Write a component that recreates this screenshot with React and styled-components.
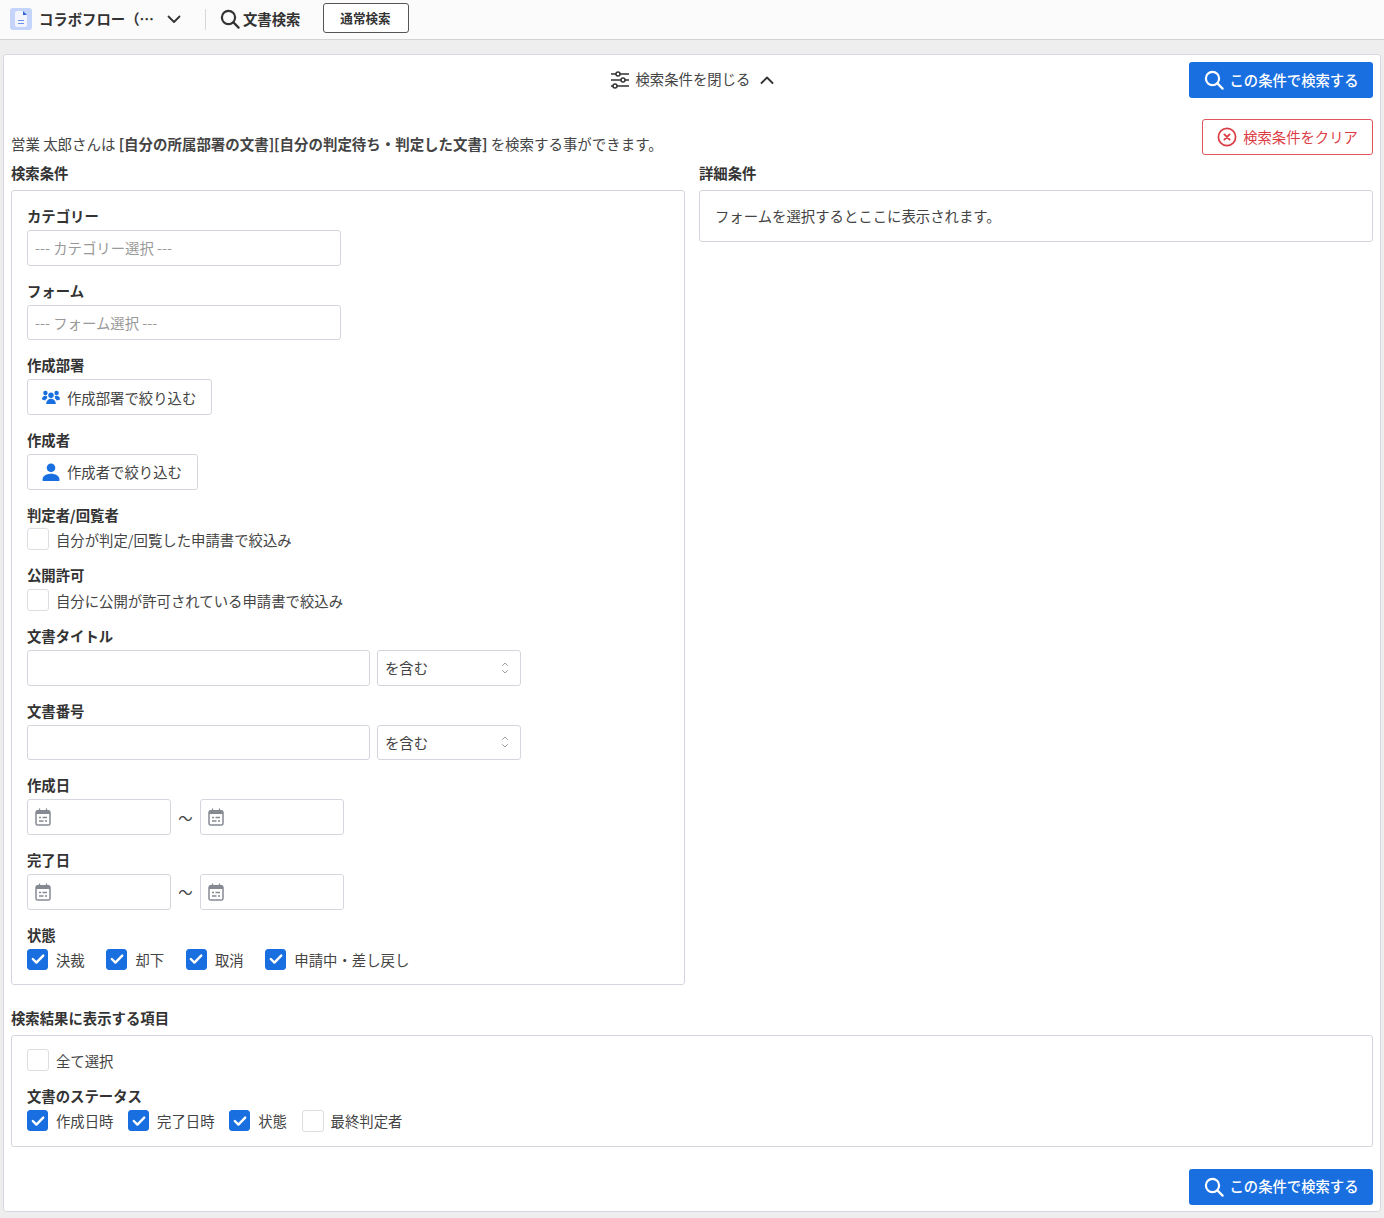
import React from 'react';
import styled, { createGlobalStyle } from 'styled-components';

const GlobalStyle = createGlobalStyle`
  * {
    box-sizing: border-box;
  }
  body {
    margin: 0;
    background-color: #eeeeee;
    color: #444;
    font-family: "Noto Sans CJK JP", "Noto Sans", sans-serif;
    font-size: 14.38px;
    line-height: 21px;
  }
`;

const TopBar = styled.header`
  display: flex;
  align-items: center;
  height: 40px;
  padding: 0 0 1px 10px;
  background-color: #fbfbfb;
  border-bottom: 1px solid #d4d4d4;
`;

const AppName = styled.span`
  width: 127px;
  margin-left: 7px;
  padding-bottom: 2px;
  color: #333;
  font-weight: 700;
  white-space: nowrap;
`;

const Divider = styled.span`
  width: 1px;
  height: 21px;
  margin: 0 14px 0 23px;
  background-color: #d8d8d8;
`;

const PageTitle = styled.span`
  margin-left: 3px;
  padding-bottom: 2px;
  color: #333;
  font-weight: 700;
`;

const ModeButton = styled.button`
  width: 86px;
  height: 30px;
  margin: 0 0 3px 22px;
  padding: 0;
  background-color: #fff;
  border: 1px solid #555;
  border-radius: 3px;
  color: #333;
  font: 700 12.6px "Noto Sans CJK JP", sans-serif;
`;

const Card = styled.main`
  margin: 14px 3px 0;
  padding: 7px 7px 6px;
  background-color: #fff;
  border: 1px solid #d5d8de;
  border-radius: 3px;
`;

const HeadRow = styled.div`
  display: grid;
  grid-template-columns: 1fr auto 1fr;
  align-items: center;
`;

const Toggle = styled.div`
  grid-column: 2;
  display: flex;
  align-items: center;
  gap: 6px;
  color: #444;
`;

const ToggleText = styled.span`
  margin-right: 2px;
  padding-bottom: 3px;
`;

const PrimaryButton = styled.button`
  display: flex;
  align-items: center;
  justify-content: center;
  gap: 6px;
  justify-self: end;
  width: 184px;
  height: 36px;
  padding: 0;
  background-color: #1a6fe0;
  border: 0;
  border-radius: 3px;
  color: #fff;
  font: 500 14.33px "Noto Sans CJK JP", sans-serif;
`;

const ButtonText = styled.span`
  padding-bottom: 2px;
`;

const BottomRow = styled.div`
  display: flex;
  justify-content: flex-end;
  margin-top: 22px;
`;

const NoticeRow = styled.div`
  display: flex;
  align-items: flex-end;
  justify-content: space-between;
  margin-top: 21px;
`;

const Notice = styled.div`
  padding-bottom: 1px;
  font-size: 14.46px;
`;

const ClearButton = styled.button`
  display: flex;
  align-items: center;
  justify-content: center;
  gap: 6px;
  width: 171px;
  height: 36px;
  padding: 0;
  background-color: #fff;
  border: 1px solid #e2555c;
  border-radius: 3px;
  color: #dc3d45;
  font: 400 14.33px "Noto Sans CJK JP", sans-serif;
`;

const Columns = styled.div`
  display: grid;
  grid-template-columns: 1fr 1fr;
  align-items: start;
  gap: 14px;
  margin-top: 8px;
`;

const SectionTitle = styled.div`
  margin-bottom: 6px;
  padding-bottom: 2px;
  color: #333;
  font-weight: 700;
  line-height: 19px;
`;

const Panel = styled.section`
  padding: ${props => (props.$tight ? '13px' : '15px')} 15px 14px;
  border: 1px solid #d3d6dc;
  border-radius: 3px;
  color: #444;
`;

const PanelNote = styled.div`
  padding-bottom: 2px;
  line-height: 19px;
`;

const ResultSection = styled.div`
  margin-top: 23px;
`;

const Field = styled.div`
  margin-bottom: 15px;
  &:last-child {
    margin-bottom: 0;
  }
`;

const FieldLabel = styled.div`
  margin-bottom: 3px;
  padding-bottom: 2px;
  color: #333;
  font-weight: 700;
  line-height: 19px;
`;

const TextInput = styled.input`
  display: block;
  width: ${props => props.$width}px;
  height: 35.67px;
  padding: 0 7px;
  background-color: #fff;
  border: 1px solid #d3d6dc;
  border-radius: 3px;
  font: 400 14.38px "Noto Sans CJK JP", sans-serif;
  &::placeholder {
    color: #999;
    opacity: 1;
  }
`;

const InputRow = styled.div`
  display: flex;
  align-items: center;
  gap: 7px;
`;

const SelectBox = styled.div`
  display: flex;
  align-items: center;
  justify-content: space-between;
  width: 144px;
  height: 35.67px;
  padding: 0 11px 0 7px;
  border: 1px solid #d3d6dc;
  border-radius: 3px;
`;

const OutlineButton = styled.button`
  display: flex;
  align-items: center;
  gap: 7px;
  height: 35.67px;
  padding: 0 15px 0 14px;
  background-color: #fff;
  border: 1px solid #d3d6dc;
  border-radius: 3px;
  color: #444;
  font: 400 14.38px "Noto Sans CJK JP", sans-serif;
`;

const DateRow = styled.div`
  display: flex;
  align-items: center;
`;

const DateBox = styled.div`
  display: flex;
  align-items: center;
  width: 144px;
  height: 35.67px;
  padding-left: 7px;
  border: 1px solid #d3d6dc;
  border-radius: 3px;
`;

const Tilde = styled.span`
  width: 29px;
  text-align: center;
`;

const CheckRow = styled.div`
  display: flex;
  align-items: center;
  gap: ${props => props.$gap || 0}px;
`;

const CheckItem = styled.label`
  display: flex;
  align-items: center;
  gap: 8px;
  height: 21.67px;
`;

const Box = styled.span`
  display: flex;
  align-items: center;
  justify-content: center;
  width: ${props => (props.$checked ? 21 : 22)}px;
  height: ${props => (props.$checked ? 21 : 22)}px;
  margin-right: ${props => (props.$checked ? 0 : -1)}px;
  background-color: ${props => (props.$checked ? '#1a6fe0' : '#fff')};
  border: ${props => (props.$checked ? '1px solid #1a6fe0' : '1.5px solid #dcdee3')};
  border-radius: 3px;
`;

const SearchIcon = ({ size = 20, color = '#333', width = 2.2 }) => (
  <svg width={size} height={size} viewBox="0 0 20 20" fill="none" stroke={color} strokeWidth={width} strokeLinecap="round">
    <circle cx="8.5" cy="8.5" r="6.6" />
    <path d="M13.4 13.4L18.6 18.6" />
  </svg>
);

const DocIcon = () => (
  <svg width="22" height="22" viewBox="0 0 22 22">
    <rect width="22" height="22" rx="3" fill="#c4d4fb" />
    <path d="M5 5a2 2 0 012-2h6l4 4v10a2 2 0 01-2 2H7a2 2 0 01-2-2z" fill="#f2f5fe" />
    <path d="M13 3l4 4h-4z" fill="#2f63d8" />
    <path d="M8 12.5h6M8 15.5h6" stroke="#6f93e6" strokeWidth="1" />
  </svg>
);

const Chevron = ({ up, size = 16, color = '#333' }) => (
  <svg width={size} height={size} viewBox="0 0 16 16" fill="none" stroke={color} strokeWidth="1.8" strokeLinecap="round" strokeLinejoin="round">
    <path d={up ? 'M2.5 11L8 5.5 13.5 11' : 'M2.5 5.5L8 11l5.5-5.5'} />
  </svg>
);

const SlidersIcon = () => (
  <svg width="20" height="18" viewBox="0 0 20 18" fill="none" stroke="#333" strokeWidth="1.5">
    <path d="M1 3h5M10 3h9M1 9h10M15 9h4M1 15h2M7 15h12" />
    <circle cx="8" cy="3" r="2" />
    <circle cx="13" cy="9" r="2" />
    <circle cx="5" cy="15" r="2" />
  </svg>
);

const ClearIcon = () => (
  <svg width="20" height="20" viewBox="0 0 20 20" fill="none" stroke="#dc3d45">
    <circle cx="10" cy="10" r="8.6" strokeWidth="1.7" />
    <path d="M7.4 7.4l5.2 5.2M12.6 7.4l-5.2 5.2" strokeWidth="1.9" strokeLinecap="round" />
  </svg>
);

const GroupIcon = () => (
  <svg width="18" height="15" viewBox="0 0 18 15" fill="#1a6fe0">
    <circle cx="9" cy="5.2" r="2.7" />
    <circle cx="3.4" cy="3" r="2.2" />
    <circle cx="14.6" cy="3" r="2.2" />
    <path d="M4.2 14c0-3 2.2-5.2 4.8-5.2s4.8 2.2 4.8 5.2z" />
    <path d="M0 9.4C0 7 1.5 5.8 3.4 5.8c.8 0 1.4.2 2 .6-.5.7-.4 1.4-.1 2.2-1 .2-1.6.8-2 1.8z" />
    <path d="M18 9.4c0-2.4-1.5-3.6-3.4-3.6-.8 0-1.4.2-2 .6.5.7.4 1.4.1 2.2 1 .2 1.6.8 2 1.8z" />
  </svg>
);

const PersonIcon = () => (
  <svg width="18" height="18" viewBox="0 0 18 18" fill="#1a6fe0">
    <circle cx="9" cy="4.7" r="4.3" />
    <path d="M.6 18v-1.800C.6 13 4.500 10.800 9 10.800s8.400 2.200 8.400 5.400V18z" />
  </svg>
);

const CalendarIcon = () => (
  <svg width="16" height="18" viewBox="0 0 16 18" fill="none">
    <rect x="1" y="3" width="14" height="14" rx="1.6" stroke="#858a92" strokeWidth="1.5" />
    <path d="M1 3.5A1.500 1.500 0 012.500 2H13.500A1.500 1.500 0 0115 3.500V6H1z" fill="#858a92" />
    <path d="M4.500 .5v3M11.500 .5v3" stroke="#858a92" strokeWidth="1.3" />
    <path d="M4 9.500h2M7.500 9.500h4.500M4 13h4.500M10 13h2" stroke="#858a92" strokeWidth="1.3" />
  </svg>
);

const SortIcon = () => (
  <svg width="8" height="12" viewBox="0 0 8 12" fill="none" stroke="#9a9ea6" strokeWidth="1" strokeLinecap="round" strokeLinejoin="round">
    <path d="M1.5 3.5L4 1l2.5 2.5M1.5 8.500L4 11l2.500-2.500" />
  </svg>
);

const CheckMark = () => (
  <svg width="14" height="12" viewBox="0 0 14 12" fill="none" stroke="#fff" strokeWidth="2.4" strokeLinecap="round" strokeLinejoin="round">
    <path d="M1.8 6l3.600 3.600 6.800-7" />
  </svg>
);

function Check({ checked, children }) {
  return (
    <CheckItem>
      <Box $checked={checked}>{checked && <CheckMark />}</Box>
      {children}
    </CheckItem>
  );
}

function MatchField({ label }) {
  return (
    <Field>
      <FieldLabel>{label}</FieldLabel>
      <InputRow>
        <TextInput $width={343} readOnly />
        <SelectBox>
          を含む
          <SortIcon />
        </SelectBox>
      </InputRow>
    </Field>
  );
}

function DateField({ label }) {
  return (
    <Field>
      <FieldLabel>{label}</FieldLabel>
      <DateRow>
        <DateBox>
          <CalendarIcon />
        </DateBox>
        <Tilde>〜</Tilde>
        <DateBox>
          <CalendarIcon />
        </DateBox>
      </DateRow>
    </Field>
  );
}

function SearchButton() {
  return (
    <PrimaryButton>
      <SearchIcon color="#fff" />
      <ButtonText>この条件で検索する</ButtonText>
    </PrimaryButton>
  );
}

export default function App() {
  return (
    <>
      <GlobalStyle />
      <TopBar>
        <DocIcon />
        <AppName>コラボフロー（…</AppName>
        <Chevron />
        <Divider />
        <SearchIcon />
        <PageTitle>文書検索</PageTitle>
        <ModeButton>通常検索</ModeButton>
      </TopBar>
      <Card>
        <HeadRow>
          <Toggle>
            <SlidersIcon />
            <ToggleText>検索条件を閉じる</ToggleText>
            <Chevron up />
          </Toggle>
          <SearchButton />
        </HeadRow>
        <NoticeRow>
          <Notice>
            営業 太郎さんは <b>[自分の所属部署の文書][自分の判定待ち・判定した文書]</b> を検索する事ができます。
          </Notice>
          <ClearButton>
            <ClearIcon />
            <ButtonText>検索条件をクリア</ButtonText>
          </ClearButton>
        </NoticeRow>
        <Columns>
          <div>
            <SectionTitle>検索条件</SectionTitle>
            <Panel>
              <Field>
                <FieldLabel>カテゴリー</FieldLabel>
                <TextInput $width={314} placeholder="--- カテゴリー選択 ---" readOnly />
              </Field>
              <Field>
                <FieldLabel>フォーム</FieldLabel>
                <TextInput $width={314} placeholder="--- フォーム選択 ---" readOnly />
              </Field>
              <Field>
                <FieldLabel>作成部署</FieldLabel>
                <OutlineButton>
                  <GroupIcon />
                  作成部署で絞り込む
                </OutlineButton>
              </Field>
              <Field>
                <FieldLabel>作成者</FieldLabel>
                <OutlineButton>
                  <PersonIcon />
                  作成者で絞り込む
                </OutlineButton>
              </Field>
              <Field>
                <FieldLabel>判定者/回覧者</FieldLabel>
                <Check>自分が判定/回覧した申請書で絞込み</Check>
              </Field>
              <Field>
                <FieldLabel>公開許可</FieldLabel>
                <Check>自分に公開が許可されている申請書で絞込み</Check>
              </Field>
              <MatchField label="文書タイトル" />
              <MatchField label="文書番号" />
              <DateField label="作成日" />
              <DateField label="完了日" />
              <Field>
                <FieldLabel>状態</FieldLabel>
                <CheckRow $gap={21.7}>
                  <Check checked>決裁</Check>
                  <Check checked>却下</Check>
                  <Check checked>取消</Check>
                  <Check checked>申請中・差し戻し</Check>
                </CheckRow>
              </Field>
            </Panel>
          </div>
          <div>
            <SectionTitle>詳細条件</SectionTitle>
            <Panel>
              <PanelNote>フォームを選択するとここに表示されます。</PanelNote>
            </Panel>
          </div>
        </Columns>
        <ResultSection>
          <SectionTitle>検索結果に表示する項目</SectionTitle>
          <Panel $tight>
            <Field>
              <Check>全て選択</Check>
            </Field>
            <Field>
              <FieldLabel>文書のステータス</FieldLabel>
              <CheckRow $gap={14.6}>
                <Check checked>作成日時</Check>
                <Check checked>完了日時</Check>
                <Check checked>状態</Check>
                <Check>最終判定者</Check>
              </CheckRow>
            </Field>
          </Panel>
        </ResultSection>
        <BottomRow>
          <SearchButton />
        </BottomRow>
      </Card>
    </>
  );
}
